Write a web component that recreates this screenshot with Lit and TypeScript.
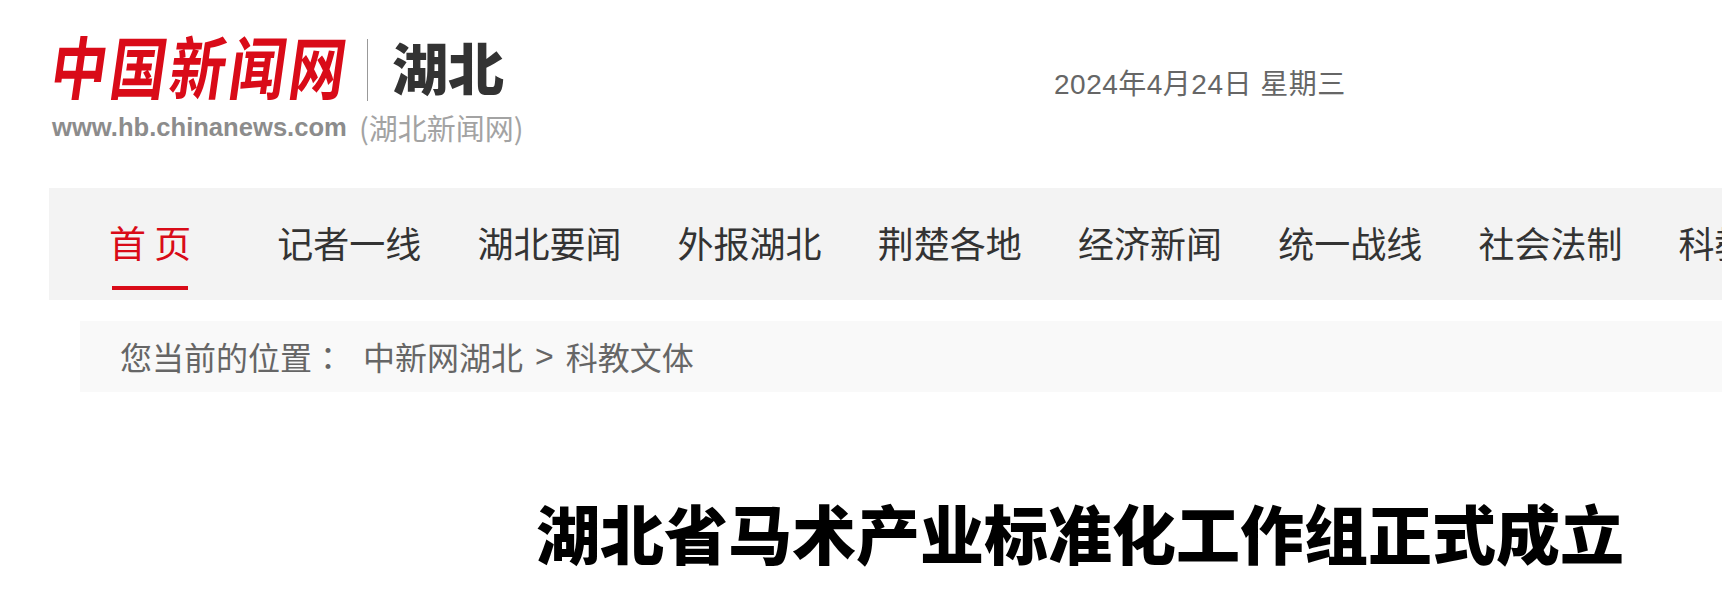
import { LitElement, html, css } from 'lit';
import { customElement } from 'lit/decorators.js';

const NAV = ['记者一线', '湖北要闻', '外报湖北', '荆楚各地', '经济新闻', '统一战线', '社会法制', '科教文体'];

@customElement('app-root')
export class AppRoot extends LitElement {
  static styles = css`
    :host {
      display: block;
      width: 1722px;
      height: 610px;
      overflow: hidden;
      background: #fff;
      font-family: "Noto Sans CJK SC", sans-serif;
    }
    .header {
      display: flex;
      height: 188px;
      box-sizing: border-box;
      padding: 28px 0 0 52px;
    }
    .logo {
      width: 500px;
      flex: none;
    }
    .logo-top {
      display: flex;
      align-items: center;
      height: 76px;
    }
    .brand {
      width: 296px;
      font-size: 56px;
      line-height: 76px;
      letter-spacing: 3.6px;
      font-weight: 700;
      color: #d90b18;
      white-space: nowrap;
      transform: translateY(-1px) skewX(-8deg) scaleY(1.22);
    }
    .sep {
      width: 1px;
      height: 62px;
      margin: 8px 24px 0 19px;
      background: #999;
    }
    .region {
      font-size: 56px;
      line-height: 76px;
      font-weight: 900;
      color: #333;
      white-space: nowrap;
    }
    .logo-sub {
      display: flex;
      align-items: center;
      height: 36px;
      margin-top: 5px;
      color: #8c8c8c;
      white-space: nowrap;
    }
    .url {
      width: 307px;
      font: 700 25.6px/36px "Liberation Sans", sans-serif;
    }
    .cn {
      font-size: 29px;
      line-height: 36px;
      color: #a3a3a3;
    }
    .date {
      margin: 38px 0 0 502px;
      font-family: "Liberation Sans", "Noto Sans CJK SC", sans-serif;
      font-size: 28px;
      line-height: 38px;
      letter-spacing: 0.5px;
      color: #666;
      white-space: nowrap;
    }
    .nav {
      display: flex;
      height: 112px;
      margin-left: 49px;
      padding-left: 60px;
      gap: 56.2px;
      background: #f3f3f3;
      font-size: 36px;
      color: #333;
      white-space: nowrap;
    }
    .nav a {
      display: block;
      flex: none;
      line-height: 108px;
      height: 112px;
      box-sizing: border-box;
    }
    .nav a.home {
      width: 84px;
      margin-right: 28px;
      font-size: 37px;
      color: #d90b18;
      position: relative;
    }
    .nav a.home::after {
      content: '';
      position: absolute;
      left: 3px;
      right: 5px;
      bottom: 10px;
      height: 4px;
      background: #d90b18;
    }
    .crumb {
      display: flex;
      height: 71px;
      margin: 21px 0 0 80px;
      padding-left: 40px;
      background: #f9f9f9;
      font-size: 32px;
      line-height: 70px;
      color: #666;
      white-space: nowrap;
    }
    .crumb .label {
      width: 243px;
    }
    .crumb .colon {
      font-family: "Noto Sans CJK TC", sans-serif;
    }
    .crumb .gt {
      margin: 0 12px;
      font-family: "Liberation Sans", sans-serif;
    }
    h1 {
      margin: 101px 0 0 536px;
      font-size: 64px;
      line-height: 76px;
      font-weight: 900;
      color: #000;
      white-space: nowrap;
    }
  `;

  render() {
    return html`
      <div class="header">
        <div class="logo">
          <div class="logo-top">
            <span class="brand">中国新闻网</span>
            <span class="sep"></span>
            <span class="region">湖北</span>
          </div>
          <div class="logo-sub">
            <span class="url">www.hb.chinanews.com</span>
            <span class="cn">(湖北新闻网)</span>
          </div>
        </div>
        <div class="date">2024年4月24日 星期三</div>
      </div>
      <nav class="nav">
        <a class="home">首 页</a>
        ${NAV.map((n) => html`<a>${n}</a>`)}
      </nav>
      <div class="crumb">
        <span class="label">您当前的位置<span class="colon">：</span></span>
        <span>中新网湖北</span><span class="gt">&gt;</span><span>科教文体</span>
      </div>
      <h1>湖北省马术产业标准化工作组正式成立</h1>
    `;
  }
}
